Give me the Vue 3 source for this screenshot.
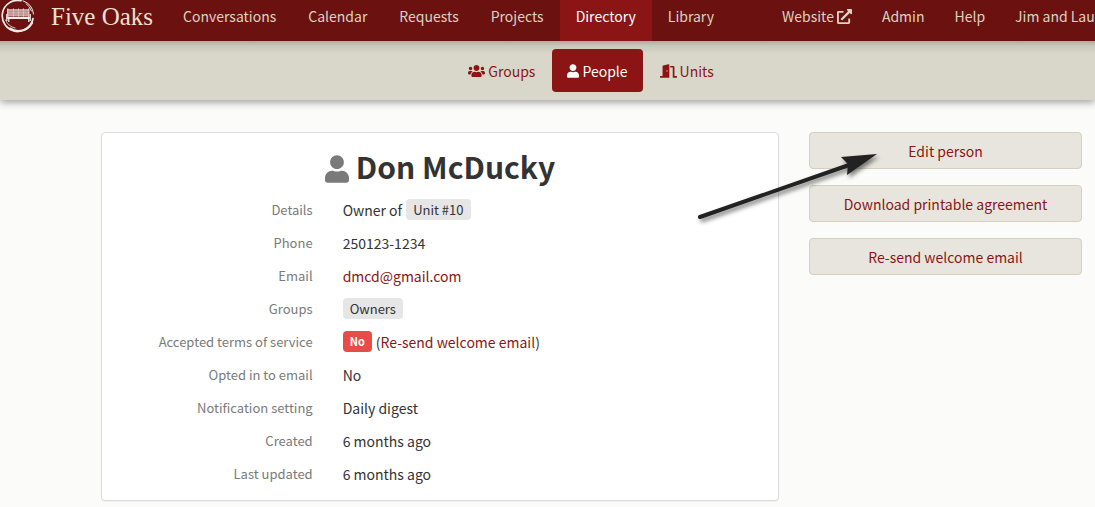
<script setup>
const icons = {
  user: {
    box: '0 0 448 512',
    d: 'M224 256c70.7 0 128-57.3 128-128S294.7 0 224 0 96 57.3 96 128s57.3 128 128 128zm89.6 32h-16.7c-22.2 10.2-46.9 16-72.9 16s-50.6-5.8-72.9-16h-16.7C60.2 288 0 348.2 0 422.4V464c0 26.5 21.5 48 48 48h352c26.5 0 48-21.5 48-48v-41.6c0-74.2-60.2-134.4-134.4-134.4z',
  },
  users: {
    box: '0 0 640 512',
    d: 'M96 224c35.3 0 64-28.7 64-64s-28.7-64-64-64-64 28.7-64 64 28.7 64 64 64zm448 0c35.3 0 64-28.7 64-64s-28.7-64-64-64-64 28.7-64 64 28.7 64 64 64zm32 32h-64c-17.6 0-33.5 7.1-45.1 18.6 40.3 22.1 68.9 62 75.1 109.4h66c17.7 0 32-14.3 32-32v-32c0-35.3-28.7-64-64-64zm-256 0c61.9 0 112-50.1 112-112S381.9 32 320 32 208 82.1 208 144s50.1 112 112 112zm76.8 32h-8.3c-20.8 10-43.9 16-68.5 16s-47.6-6-68.5-16h-8.3C179.6 288 128 339.6 128 403.2V432c0 26.5 21.5 48 48 48h288c26.5 0 48-21.5 48-48v-28.8c0-63.6-51.6-115.2-115.2-115.2zm-223.7-13.4C161.5 263.1 145.6 256 128 256H64c-35.3 0-64 28.7-64 64v32c0 17.7 14.3 32 32 32h65.9c6.3-47.4 34.9-87.3 75.2-109.4z',
  },
  door: {
    box: '0 0 640 512',
    d: 'M624 448h-80V113.45C544 86.19 522.47 64 496 64H384v64h96v384h144c8.84 0 16-7.16 16-16v-32c0-8.84-7.16-16-16-16zM312.24 1.01l-192 49.74C105.99 54.44 96 67.7 96 82.92V448H16c-8.84 0-16 7.16-16 16v32c0 8.84 7.16 16 16 16h336V33.18c0-21.58-19.56-37.41-39.76-32.17zM264 288c-13.25 0-24-14.33-24-32s10.75-32 24-32 24 14.33 24 32-10.75 32-24 32z',
  },
  external: {
    box: '0 0 512 512',
    d: 'M432,320H400a16,16,0,0,0-16,16V448H64V128H208a16,16,0,0,0,16-16V80a16,16,0,0,0-16-16H48A48,48,0,0,0,0,112V464a48,48,0,0,0,48,48H400a48,48,0,0,0,48-48V336A16,16,0,0,0,432,320ZM488,0h-128c-21.37,0-32.05,25.91-17,41l35.73,35.73L135,320.37a24,24,0,0,0,0,34L157.67,377a24,24,0,0,0,34,0L435.28,133.32,471,169c15,15,41,4.5,41-17V24A24,24,0,0,0,488,0Z',
  },
}

const mainLinks = ['Conversations', 'Calendar', 'Requests', 'Projects', 'Directory', 'Library']
const sideLinks = [
  { label: 'Website', icon: icons.external },
  { label: 'Admin' },
  { label: 'Help' },
  { label: 'Jim and Lau' },
]
const tabs = [
  { label: 'Groups', icon: icons.users, kind: 'wide' },
  { label: 'People', icon: icons.user, kind: 'narrow', active: true },
  { label: 'Units', icon: icons.door, kind: 'wide' },
]
const actions = ['Edit person', 'Download printable agreement', 'Re-send welcome email']
</script>

<template>
  <div class="page">
    <header class="topbar">
      <a class="brand" href="#">
        <svg class="logo" viewBox="0 0 34 34" aria-hidden="true">
          <g fill="none" stroke="#f1e9e6" stroke-linecap="round">
            <path d="M32 19.500A15.500 15.500 0 1 1 20 1.700" stroke-width="1.700" />
            <path d="M31 24A15.500 15.500 0 0 1 9 29.500" stroke-width="2.200" />
            <path d="M22 1.800A15.500 15.500 0 0 1 32.500 15" stroke-width="1" />
            <path d="M25 4.500A14 14 0 0 1 30.500 12" stroke-width="1" />
            <path d="M4.500 21A13.500 13.500 0 0 0 14 29" stroke-width="0.800" />
          </g>
          <g fill="#ddc9c7">
            <rect x="7" y="10" width="21" height="7.500" opacity="0.800" />
            <rect x="6" y="9.500" width="1.500" height="9" />
            <rect x="12" y="9.500" width="1" height="8" />
            <rect x="17" y="9.500" width="1" height="8" />
            <rect x="22" y="9.500" width="1" height="8" />
            <rect x="27" y="9.500" width="1.500" height="9" />
            <rect x="5" y="18" width="25" height="2" fill="#f5eeec" />
            <rect x="5" y="15" width="1.500" height="7" />
            <rect x="28.500" y="15" width="1.500" height="7" />
            <rect x="7" y="20" width="1.500" height="3" />
            <rect x="27" y="20" width="1.500" height="3" />
          </g>
          <path d="M7 12.500h21M7 15h21" stroke="#b98582" stroke-width="0.500" />
        </svg>
        <span>Five Oaks</span>
      </a>
      <nav class="links" aria-label="Main">
        <a
          v-for="label in mainLinks"
          :key="label"
          href="#"
          :class="{ active: label === 'Directory' }"
        >{{ label }}</a>
      </nav>
      <nav class="links account" aria-label="Account">
        <a v-for="link in sideLinks" :key="link.label" href="#">{{ link.label }}<svg
          v-if="link.icon" class="external" :viewBox="link.icon.box" aria-hidden="true"
        ><path :d="link.icon.d" /></svg></a>
      </nav>
    </header>

    <nav class="subnav" aria-label="Directory">
      <a v-for="tab in tabs" :key="tab.label" href="#" :class="{ active: tab.active }">
        <svg :class="tab.kind" :viewBox="tab.icon.box" aria-hidden="true"><path :d="tab.icon.d" /></svg>
        <span>{{ tab.label }}</span>
      </a>
    </nav>

    <main class="content">
      <section class="card">
        <h1>
          <svg :viewBox="icons.user.box" aria-hidden="true"><path :d="icons.user.d" /></svg>
          <span>Don McDucky</span>
        </h1>
        <dl>
          <dt>Details</dt>
          <dd><span>Owner of</span><a class="chip" href="#">Unit #10</a></dd>
          <dt>Phone</dt>
          <dd>250123-1234</dd>
          <dt>Email</dt>
          <dd><a href="#">dmcd@gmail.com</a></dd>
          <dt>Groups</dt>
          <dd><a class="chip" href="#">Owners</a></dd>
          <dt>Accepted terms of service</dt>
          <dd><span class="flag">No</span><span>(<a href="#">Re-send welcome email</a>)</span></dd>
          <dt>Opted in to email</dt>
          <dd>No</dd>
          <dt>Notification setting</dt>
          <dd>Daily digest</dd>
          <dt>Created</dt>
          <dd>6 months ago</dd>
          <dt>Last updated</dt>
          <dd>6 months ago</dd>
        </dl>
      </section>

      <aside class="actions">
        <button v-for="action in actions" :key="action" type="button">{{ action }}</button>
        <svg class="arrow" viewBox="0 0 200 90" aria-hidden="true">
          <path d="M11 76L160 24" fill="none" stroke="#222" stroke-width="4" stroke-linecap="round" />
          <path d="M188 13L152 16L159 23L158 34Z" fill="#222" />
        </svg>
      </aside>
    </main>
  </div>
</template>

<style>
body {
  margin: 0;
  background: #fbfbf9;
}
</style>

<style scoped>
.page {
  font-family: "Noto Sans CJK SC", "Noto Sans", sans-serif;
  font-size: 14px;
  line-height: 24px;
  color: #333;
  overflow: hidden;
}

a {
  color: #8b1515;
  text-decoration: none;
}

svg {
  fill: currentColor;
  flex: none;
}

.topbar {
  position: relative;
  z-index: 1;
  display: flex;
  background: #6b1110;
  overflow: hidden;
  white-space: nowrap;
}

.brand {
  display: flex;
  flex: none;
  width: 167px;
  gap: 16px;
  color: #ebe0d2;
  font-family: "Liberation Serif", serif;
  font-size: 25px;
  line-height: 34px;
}

.logo {
  width: 34px;
  height: 34px;
  margin-left: 1px;
  margin-top: -1px;
}

.links {
  display: flex;
  flex: none;
}

.links a {
  padding: 4px 16px 13px;
  color: #dcd3c3;
}

.links a.active {
  background: #8b1515;
  color: #fff;
}

.account {
  margin-left: 37px;
}

.account a {
  padding-left: 15px;
  padding-right: 15px;
}

.external {
  width: 15px;
  height: 15px;
  margin-left: 3px;
  vertical-align: -2px;
}

.subnav {
  display: flex;
  justify-content: center;
  gap: 2px;
  padding: 8px 0 8px 87px;
  background: linear-gradient(#aeaca0, #cbc9bc 5px, #d9d7ca 13px);
  box-shadow: 0 2px 8px rgba(0, 0, 0, 0.4);
}

.subnav a {
  display: flex;
  align-items: center;
  gap: 3px;
  height: 43px;
  padding: 0 15px;
  border-radius: 4px;
}

.subnav a.active {
  background: #8b1515;
  color: #fff;
}

.subnav .wide {
  width: 17px;
  height: 14px;
}

.subnav .narrow {
  width: 12px;
  height: 14px;
}

.content {
  display: grid;
  grid-template-columns: minmax(0, 678fr) minmax(0, 273fr);
  align-items: start;
  gap: 30px;
  padding: 32px 13px 6px 101px;
}

.card {
  background: #fff;
  border: 1px solid #dcdcdf;
  border-radius: 4px;
  box-shadow: 0 1px 1px rgba(0, 0, 0, 0.05);
  padding: 11px 0 10px;
}

h1 {
  display: flex;
  justify-content: center;
  align-items: flex-start;
  gap: 7px;
  margin: 0;
  font-size: 30px;
  line-height: 44px;
  font-weight: 700;
}

h1 svg {
  width: 24px;
  height: 28px;
  margin-top: 11px;
  color: #7a7a7a;
}

dl {
  display: grid;
  grid-template-columns: minmax(0, 15fr) minmax(0, 31fr);
  grid-auto-rows: 33px;
  align-items: center;
  column-gap: 30px;
  margin: 5px 0 0;
}

dt {
  text-align: right;
  font-size: 13px;
  color: #7a7a7a;
}

dd {
  display: flex;
  align-items: center;
  gap: 4px;
  margin: 0;
}

.chip {
  padding: 0 7px;
  border-radius: 4px;
  background: #e6e6e6;
  color: #333;
  font-size: 13px;
  line-height: 21px;
}

.flag {
  padding: 0 7px;
  border-radius: 4px;
  background: #e74c47;
  color: #fff;
  font-size: 11px;
  font-weight: 700;
  line-height: 21px;
}

.actions {
  position: relative;
  display: grid;
  gap: 16px;
}

button {
  height: 37px;
  padding: 0 12px;
  border: 1px solid #d6cfbd;
  border-radius: 4px;
  background: #e8e5de;
  color: #8b1515;
  font: inherit;
}

.arrow {
  position: absolute;
  top: 9px;
  left: -120px;
  width: 200px;
  height: 90px;
  filter: drop-shadow(2px 3px 2px rgba(0, 0, 0, 0.5));
  pointer-events: none;
}
</style>
